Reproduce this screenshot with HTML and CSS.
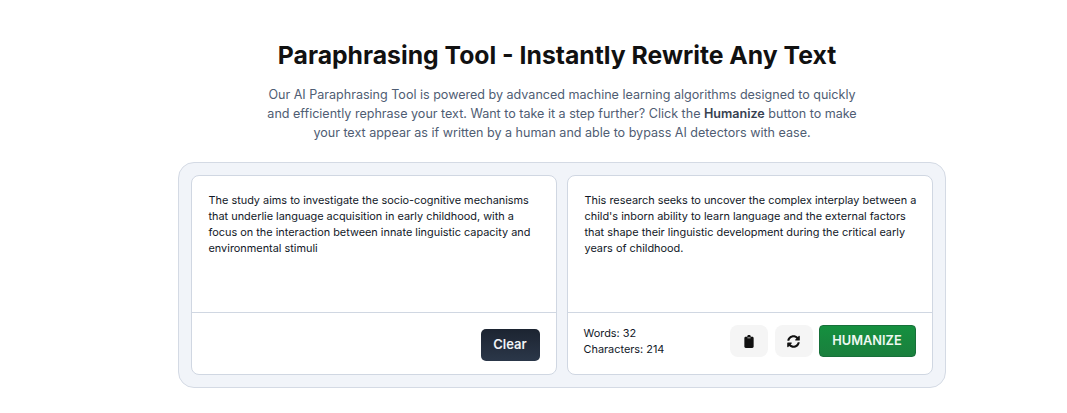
FILE: index.html
```html
<!DOCTYPE html>
<html lang="en">
<head>
  <meta charset="UTF-8">
  <meta name="viewport" content="width=device-width, initial-scale=1.0">
  <title>Paraphrasing Tool</title>
  <link rel="stylesheet" href="styles.css">
</head>
<body>

  <header class="intro">
    <h1>Paraphrasing Tool - Instantly Rewrite Any Text</h1>
    <p>Our AI Paraphrasing Tool is powered by advanced machine learning algorithms designed to quickly<br>and efficiently rephrase your text. Want to take it a step further? Click the <strong>Humanize</strong> button to make<br>your text appear as if written by a human and able to bypass AI detectors with ease.</p>
  </header>

  <main class="tool">
    <section class="card">
      <div class="card-text">The study aims to investigate the socio-cognitive mechanisms that underlie language acquisition in early childhood, with a focus on the interaction between innate linguistic capacity and environmental stimuli</div>
      <div class="card-foot card-foot-end">
        <button class="btn-clear">Clear</button>
      </div>
    </section>

    <section class="card">
      <div class="card-text">This research seeks to uncover the complex interplay between a child's inborn ability to learn language and the external factors that shape their linguistic development during the critical early years of childhood.</div>
      <div class="card-foot">
        <div class="stats">
          <div>Words: 32</div>
          <div>Characters: 214</div>
        </div>
        <div class="actions">
          <button class="btn-icon" aria-label="Copy">
            <svg width="10" height="13" viewBox="0 0 10 14"><path fill="#111" d="M3.200 1.800V1.200C3.200 .5 3.900 0 5 0s1.800 .5 1.800 1.200v.6h1.700C9.400 1.800 10 2.400 10 3.300v9.200c0 .9-.6 1.500-1.500 1.500h-7C.6 14 0 13.400 0 12.500V3.300C0 2.400 .6 1.800 1.500 1.800h1.700zm.1 1.700h3.400v-.9H3.300v.9z"/></svg>
          </button>
          <button class="btn-icon" aria-label="Regenerate">
            <svg width="13" height="13" viewBox="0 0 512 512"><path fill="#111" d="M370.700 133.300C339.500 104 298.900 88 255.800 88c-77.500.1-144.300 53.200-162.800 126.900-1.300 5.400-6.100 9.200-11.700 9.200H24.100c-7.500 0-13.200-6.800-11.800-14.200C33.900 94.900 134.800 8 256 8c66.400 0 126.800 26.100 171.300 68.700L463 41c15.100-15.100 41-4.400 41 17v134c0 13.300-10.700 24-24 24H346c-21.400 0-32.100-25.900-17-41l41.700-41.700zM32 296h134c21.400 0 32.100 25.900 17 41l-41.700 41.700c31.200 29.300 71.800 45.300 114.900 45.300 77.400-.1 144.300-53.100 162.800-126.800 1.300-5.400 6.100-9.200 11.700-9.200h57.300c7.500 0 13.200 6.800 11.800 14.200C478.100 417.100 377.200 504 256 504c-66.400 0-126.800-26.100-171.300-68.700L49 471c-15.100 15.100-41 4.400-41-17V320c0-13.300 10.700-24 24-24z"/></svg>
          </button>
          <button class="btn-humanize">HUMANIZE</button>
        </div>
      </div>
    </section>
  </main>

</body>
</html>
```

FILE: styles.css
```css
body {
  font-family: "Inter", "Liberation Sans", sans-serif;
  margin: 0;
  padding: 0 0 0 56px;
  background-color: white;
  color: #111827;
}
.intro {
  text-align: center;
  padding-top: 40px;
}
.intro h1 {
  margin: 0 9px 0 0;
  font-size: 24.75px;
  line-height: 30px;
  font-weight: 700;
  color: #111;
}
.intro p {
  margin: 15px 0 0;
  padding-left: 1px;
  font-size: 12.55px;
  line-height: 19px;
  color: #4f5d73;
}
.intro strong {
  font-weight: 600;
  color: #374151;
}
.tool {
  display: grid;
  grid-template-columns: 1fr 1fr;
  gap: 10px;
  width: 768px;
  height: 226px;
  box-sizing: border-box;
  margin: 20px auto 0;
  padding: 12px;
  background-color: #f1f4f9;
  border: 1px solid #d4dae4;
  border-radius: 16px;
}
.card {
  display: flex;
  flex-direction: column;
  background-color: white;
  border: 1px solid #d0d7e2;
  border-radius: 8px;
}
.card-text {
  height: 137px;
  box-sizing: border-box;
  padding: 16px 15px 16px 17px;
  font-size: 10.9px;
  line-height: 16px;
  border-bottom: 1px solid #d0d7e2;
}
.card-foot {
  flex: 1;
  display: flex;
  align-items: flex-start;
  justify-content: space-between;
  padding: 12px 16px 0;
}
.card-foot-end {
  justify-content: flex-end;
  padding-top: 16px;
}
.stats {
  font-size: 10.9px;
  line-height: 16px;
}
.actions {
  display: flex;
  gap: 7px;
}
button {
  font-family: inherit;
  border: none;
  cursor: pointer;
}
.btn-clear {
  width: 59px;
  height: 32px;
  padding: 0 0 2px;
  background: linear-gradient(#1c2431, #2b3749);
  color: #f1f3f6;
  border-radius: 5px;
  font-size: 13px;
  font-weight: 600;
}
.btn-icon {
  display: flex;
  align-items: center;
  justify-content: center;
  width: 38px;
  height: 32px;
  padding: 0;
  background-color: #f5f5f5;
  border-radius: 8px;
}
.btn-humanize {
  width: 97px;
  height: 32px;
  margin-left: -1px;
  padding: 0 0 1px;
  background: linear-gradient(#15903f, #1a7f3d);
  border: 1px solid #17703a;
  color: #eef8f1;
  border-radius: 4px;
  font-size: 12.8px;
  font-weight: 600;
}
```
